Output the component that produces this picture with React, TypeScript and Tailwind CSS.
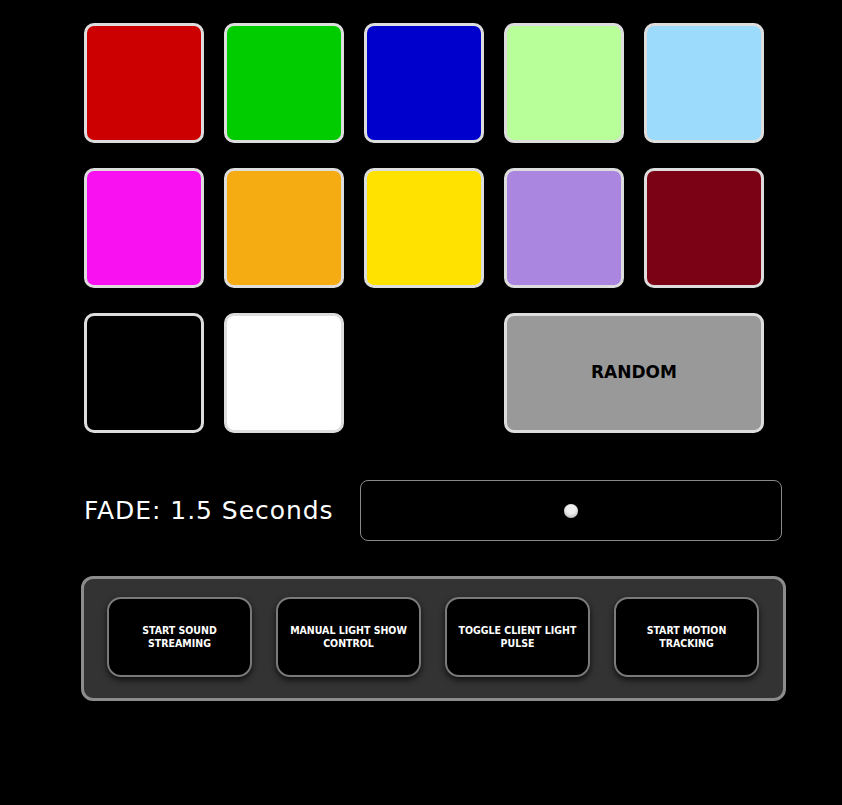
const SWATCHES = [
  "#cc0000",
  "#00cc00",
  "#0000cc",
  "#b9ff99",
  "#9ddbfd",
  "#f911f2",
  "#f5ac12",
  "#ffe200",
  "#ab86e0",
  "#7b0215",
  "#000000",
  "#ffffff",
];

const ACTIONS = [
  ["START SOUND", "STREAMING"],
  ["MANUAL LIGHT SHOW", "CONTROL"],
  ["TOGGLE CLIENT LIGHT", "PULSE"],
  ["START MOTION", "TRACKING"],
];

const font = { fontFamily: '"DejaVu Sans", "Liberation Sans", sans-serif' };
const condensed = { fontFamily: '"DejaVu Sans Condensed", "DejaVu Sans", sans-serif' };

export default function App() {
  return (
    <div className="min-h-[805px] w-full bg-black pl-[81px] pt-[23px]" style={font}>
      {/* colour picker */}
      <div className="ml-[3px] grid grid-cols-[repeat(5,120px)] gap-x-5 gap-y-[25px]">
        {SWATCHES.map((color) => (
          <button
            key={color}
            className="h-[120px] w-[120px] rounded-[10px] border-[3px] border-[#dddddd]"
            style={{ backgroundColor: color }}
          />
        ))}
        <div />
        <button className="col-span-2 flex h-[120px] items-center justify-center rounded-[10px] border-[3px] border-[#dddddd] bg-[#999999] text-[17px] font-bold text-black">
          RANDOM
        </button>
      </div>

      {/* fade slider */}
      <div className="ml-[3px] mt-[47px] flex items-center">
        <p className="w-[276px] text-[25px] tracking-[0.95px] text-white">FADE: 1.5 Seconds</p>
        <div className="flex h-[61px] w-[422px] items-center justify-center rounded-[8px] border border-[#8a8a8a]">
          <div className="h-[14px] w-[14px] rounded-full bg-[#eeeeee] shadow-[inset_0_-2px_3px_rgba(0,0,0,0.2)]" />
        </div>
      </div>

      {/* actions */}
      <div className="mt-[35px] flex h-[125px] w-[705px] gap-6 rounded-[12px] border-[3px] border-[#8c8c8c] bg-[#333333] pl-[23px] pt-[18px]">
        {ACTIONS.map(([a, b]) => (
          <button
            key={a}
            className="flex h-[80px] w-[145px] flex-col items-center justify-center rounded-[14px] border-2 border-[#7a7a7a] bg-black text-[10.5px] font-bold leading-[13px] text-white shadow-[0_3px_6px_rgba(0,0,0,0.7)]"
            style={condensed}
          >
            <span>{a}</span>
            <span>{b}</span>
          </button>
        ))}
      </div>
    </div>
  );
}
